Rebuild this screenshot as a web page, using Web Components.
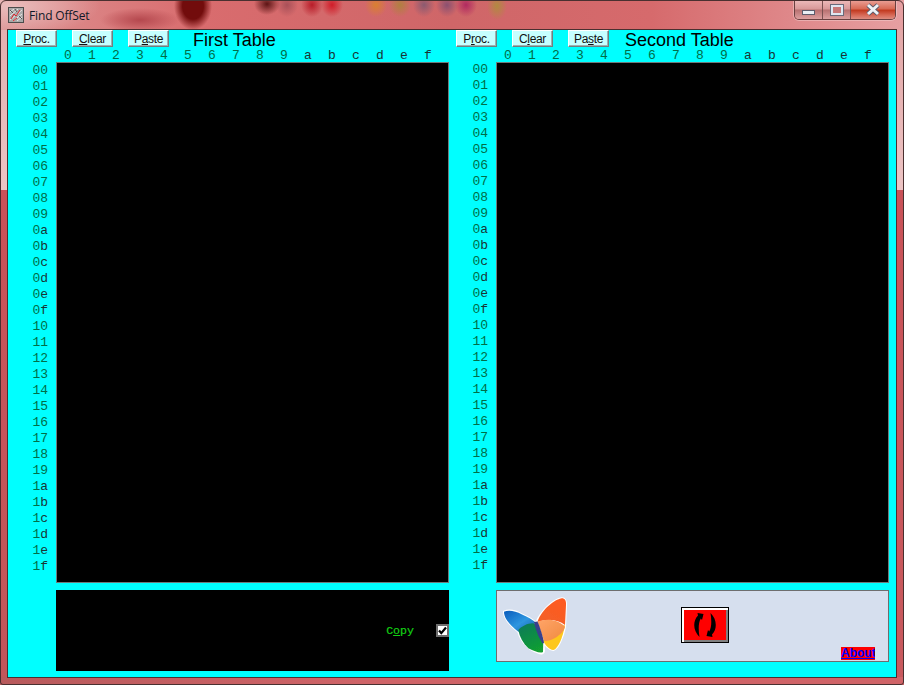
<!DOCTYPE html>
<html><head><meta charset="utf-8">
<style>
html,body{margin:0;padding:0;width:904px;height:685px;overflow:hidden;background:#c85a5c}
</style></head><body>
<win-frame>
  <win-icon slot="icon"></win-icon>
  <span slot="title">Find OffSet</span>
  <caption-buttons slot="caps"></caption-buttons>
  <table-panel side="left" title-text="First Table" u1="0" u2="0" u3="1">
    <result-pane></result-pane>
  </table-panel>
  <table-panel side="right" title-text="Second Table" u1="1" u2="1" u3="2">
    <logo-pane></logo-pane>
  </table-panel>
</win-frame>
<script>
const def=(name,html,extra)=>{
  customElements.define(name,class extends HTMLElement{
    constructor(){super();this.attachShadow({mode:'open'}).innerHTML=html;}
    connectedCallback(){extra&&extra.call(this,this.shadowRoot);}
  });
};
def('win-frame',`<style>
:host{display:flex;flex-direction:column;position:relative;width:904px;height:685px;box-sizing:border-box;overflow:hidden;
 font-family:"Liberation Sans",sans-serif;
 background:
  radial-gradient(ellipse 19px 24px at 193px 6px,#720c0c 0 55%,#72101000 100%),
  radial-gradient(ellipse 40px 12px at 140px 20px,#b5484e 0,#b5484e00 100%),
  radial-gradient(ellipse 13px 11px at 267px 4px,#5c1414 0,#5c141400 100%),
  radial-gradient(ellipse 11px 12px at 287px 5px,#a85058 0,#a8505800 100%),
  radial-gradient(ellipse 11px 12px at 312px 5px,#b81c28 0,#b81c2800 100%),
  radial-gradient(ellipse 11px 12px at 332px 5px,#d01c28 0,#d01c2800 100%),
  radial-gradient(ellipse 11px 12px at 376px 5px,#d98030 0,#d9803000 100%),
  radial-gradient(ellipse 11px 12px at 400px 5px,#b08040 0,#b0804000 100%),
  radial-gradient(ellipse 11px 12px at 424px 5px,#8a5a70 0,#8a5a7000 100%),
  radial-gradient(ellipse 11px 12px at 447px 5px,#8a5070 0,#8a507000 100%),
  radial-gradient(ellipse 11px 12px at 466px 5px,#b02a60 0,#b02a6000 100%),
  radial-gradient(ellipse 10px 14px at 497px 6px,#b08a40 0,#b08a4000 100%),
  radial-gradient(ellipse 90px 30px at 10px 6px,#eabcbc 0,#eabcbc00 100%),
  linear-gradient(90deg,#dc9494 0,#d96c6e 22%,#cf6668 50%,#d66a6c 72%,#e6a0a2 100%);
}
.edge{position:absolute;inset:0;border:1px solid #4a3030;border-radius:6px 6px 3px 3px;pointer-events:none;z-index:2}
.sideL,.sideR{position:absolute;top:30px;bottom:0;width:8px}
.sideL{left:0;background:linear-gradient(#e3b0b0 0,#ecc4c4 160px,#ecc4c4 160px,#c95258 160px,#c2565a 100%)}
.sideR{right:0;width:8px;background:linear-gradient(#e3a8a8 0,#ecc4c4 160px,#c95258 160px,#c85a5e 100%)}
.base{position:absolute;left:0;right:0;bottom:0;height:8px;background:linear-gradient(90deg,#b85a5c,#cf6468 40%,#d06468)}
.bar{position:relative;z-index:1;display:flex;align-items:flex-start;height:30px;flex:none;padding-left:8px}
.titletext{font:12px "Open Sans","Noto Sans",sans-serif;color:#101828;margin:8px 0 0 5px;line-height:16px;flex:1;letter-spacing:-.15px}
.client{position:relative;z-index:1;flex:none;display:grid;grid-template-columns:448px 440px;width:888px;height:647px;margin-left:8px;background:#0ff;outline:1px solid #4a3030}
</style>
<div class="sideL"></div><div class="sideR"></div><div class="base"></div>
<div class="bar"><slot name="icon"></slot><div class="titletext"><slot name="title"></slot></div><slot name="caps"></slot></div>
<div class="client"><slot></slot></div>
<div class="edge"></div>`);
def('win-icon',`<style>:host{display:block;width:16px;height:16px;margin-top:7px}svg{display:block}</style>
<svg width="16" height="16" viewBox="0 0 16 16"><rect x=".5" y=".5" width="15" height="15" fill="#a9a9a9" stroke="#4c4c4c"/>
<path d="M2 5l4-3M2 9l8-7M2 13L14 3M5 14l9-7M9 14l5-4" stroke="#e8e8e8" stroke-width="1"/>
<path d="M3 12l3-5 2 2 4-6M5 14l4-3" stroke="#d8222a" stroke-width="1" fill="none"/>
<path d="M2 3l3 3M7 2l2 3M11 9l3 3" stroke="#555" fill="none"/></svg>`);
def('caption-buttons',`<style>
:host{display:flex;width:102px;height:20px;margin-right:8px;border:1px solid #6a4040;border-top:0;border-radius:0 0 5px 5px;overflow:hidden;box-sizing:border-box;box-shadow:0 0 0 1px #f4d0d080}
b{display:grid;place-items:center;height:100%;box-sizing:border-box;background:linear-gradient(#eebcbc 0,#d89898 48%,#b87070 52%,#dca0a0 100%);border-right:1px solid #7a5050}
b:nth-of-type(1),b:nth-of-type(2){width:28px}
b:nth-of-type(3){flex:1;border:0;background:linear-gradient(#eba39a 0,#d86a55 46%,#c23a20 54%,#d86a58 80%,#dd8c80 100%)}
.min{width:13px;height:5px;background:#e8eef4;border:1px solid #5c5c6c;box-sizing:border-box;margin-top:6px}
.max{width:12px;height:10px;border:2px solid #dfe6f0;outline:1px solid #6a6a7a;outline-offset:0;box-sizing:border-box;background:#c87878}
</style>
<b><i class="min"></i></b><b><i class="max"></i></b>
<b><svg width="18" height="13" viewBox="0 0 18 13"><path d="M4 2l10 9M14 2L4 11" stroke="#5c5c6c" stroke-width="4.800"/><path d="M4 2l10 9M14 2L4 11" stroke="#eef2f6" stroke-width="3"/></svg></b>`);
def('tool-button',`<style>
:host{display:block;width:41px;height:17px;box-sizing:border-box;background:#c6ffff;border:1px solid;border-color:#fff #6f7f7f #6f7f7f #fff;
 box-shadow:inset -1px -1px 0 #9fb0b0;font:12px/16px "Liberation Sans",sans-serif;letter-spacing:-.35px;color:#111;text-align:center}
</style><slot></slot>`);
def('table-panel',`<style>
:host{display:block;position:relative;--pad:8px;--lab:48px;--roff:0px;--tm:9px}
:host([side=right]){--pad:0px;--lab:40px;--roff:-1px;--tm:1px}
.top{display:flex;height:19px;padding-left:var(--pad);gap:15px}
.tt{font:18px/18px "Liberation Sans",sans-serif;color:#000;margin-left:var(--tm);padding-top:1px;white-space:nowrap}
.cols{display:grid;grid-template-columns:repeat(16,24px);margin-left:var(--lab);height:13px;font:13px/13px "Liberation Mono",monospace;white-space:pre}
.cols span{padding-left:8px}
.main{display:grid;grid-template-columns:var(--lab) 393px}
.rows{display:flex;flex-direction:column;align-items:flex-end;padding:calc(1px + var(--roff)) 8px 0 0;font:13px/16px "Liberation Mono",monospace}
.black{height:521px;box-sizing:border-box;background:#000;border:1px solid #6e7a7a}
.bot{margin:7px 0 0 var(--lab);width:393px}
.d{color:#006e48}.l{color:#1a3434}
</style>
<div class="top"><tool-button class="b1"></tool-button><tool-button class="b2"></tool-button><tool-button class="b3"></tool-button><div class="tt"></div></div>
<div class="cols"></div>
<div class="main"><div class="rows"></div><div class="black"></div></div>
<div class="bot"><slot></slot></div>`,function(s){
  const u=(w,i)=>w.slice(0,i)+'<u>'+w[i]+'</u>'+w.slice(+i+1);
  const col=t=>[...t].map(c=>`<span class="${/\d/.test(c)?'d':'l'}" style="padding:0">${c}</span>`).join('');
  s.querySelector('.b1').innerHTML=u('Proc.',+this.getAttribute('u1'));
  s.querySelector('.b2').innerHTML=u('Clear',+this.getAttribute('u2'));
  s.querySelector('.b3').innerHTML=u('Paste',+this.getAttribute('u3'));
  s.querySelector('.tt').textContent=this.getAttribute('title-text');
  s.querySelector('.cols').innerHTML=[...'0123456789abcdef'].map(c=>`<span class="${/\d/.test(c)?'d':'l'}">${c}</span>`).join('');
  s.querySelector('.rows').innerHTML=Array.from({length:32},(_,i)=>`<div>${col(i.toString(16).padStart(2,'0'))}</div>`).join('');
});
def('result-pane',`<style>
:host{display:flex;align-items:center;justify-content:flex-end;height:81px;background:#000;box-sizing:border-box}
.c{font:11.6px/14px "Liberation Mono",monospace;color:#14d014;margin-right:22px;-webkit-text-stroke:.2px #14d014}
.k{width:13px;height:13px;box-sizing:border-box;background:#fff;border:2px solid #6e6e6e;display:grid;place-items:center}
</style><span class="c">C<u>o</u>py</span><span class="k"><svg width="9" height="9" viewBox="0 0 9 9"><path d="M1 4.500l2.300 2.600L8 1.500" fill="none" stroke="#000" stroke-width="2.200"/></svg></span>`);
def('logo-pane',`<style>
:host{display:grid;grid-template-columns:184px 48px 1fr;height:72px;box-sizing:border-box;background:#d6dfee;border:1px solid #6e6e6e}
svg.logo{display:block;margin:6px 0 0 5px}
.red{align-self:start;margin-top:16px;width:48px;height:36px;box-sizing:border-box;background:#f00;border:1px solid #000;box-shadow:inset 2px 2px 0 #fff,inset -2px -2px 0 #808080;display:grid;place-items:center}
.about{justify-self:end;align-self:end;margin:0 13px 1px 0;width:34px;overflow:hidden;background:#f00;color:#00f;font:bold 12px/13px "Liberation Sans",sans-serif;text-decoration:underline;height:13px;white-space:nowrap}
</style>
<svg class="logo" width="66" height="60" viewBox="0 0 66 60">
<defs>
<linearGradient id="gb" x1="0" y1="0" x2="1" y2="1"><stop offset="0" stop-color="#0a5cbc"/><stop offset=".55" stop-color="#2e96e0"/><stop offset="1" stop-color="#1c5eaa"/></linearGradient>
<linearGradient id="go" x1=".8" y1="0" x2=".2" y2="1"><stop offset="0" stop-color="#ff5a20"/><stop offset="1" stop-color="#f26028"/></linearGradient>
<linearGradient id="gl" x1="0" y1="0" x2="1" y2="1"><stop offset="0" stop-color="#ffa468"/><stop offset="1" stop-color="#f08a40"/></linearGradient>
<linearGradient id="gg" x1=".3" y1="0" x2=".7" y2="1"><stop offset="0" stop-color="#0c7c58"/><stop offset="1" stop-color="#12a030"/></linearGradient>
<filter id="s" x="-5%" y="-5%" width="110%" height="110%"><feGaussianBlur stdDeviation=".45"/></filter>
</defs>
<path d="M59.700 1.300C63 1.300 64.300 4 64 8L63 30C61 40 56 52 51.300 53C47 52.500 43 48 41.300 44.700L34.700 24.700C38 16 50 3 59.700 1.300ZM2 14.700C6 13 13 13.500 20 17.500C26 20 31 23 34.700 26L41.300 43L42 54C41.800 57 39 57 36 55.500C31 54 27 52 24 48C20 44 17.500 39 16.300 34.700C9 29 2 22 2 14.700Z" fill="#fff" stroke="#fff" stroke-width="2" stroke-linejoin="round"/>
<g filter="url(#s)">
<path d="M63 28C61 40 56 52 51.300 53C47 52.500 43 48 41.300 44L45 36Z" fill="#fdc71c"/>
<path d="M2 14.700C6 13 13 13.500 20 17.500C26 20 31 23 34 25.700L22 33L16.300 34.700C9 29 2 22 2 14.700Z" fill="url(#gb)"/>
<path d="M16.300 33C20 29 26 26 31.300 26.300C35 27 39 36 41.300 43L41 55C38 56.500 33 54.500 26.300 51.300C21 46 17.500 40 16.300 33Z" fill="url(#gg)"/>
<path d="M59.700 1.300C63 1.300 64.300 4 64 8L63 28C56 22 44 22 35.500 25C38 16 50 3 59.700 1.300Z" fill="url(#go)"/>
<path d="M35.500 25C44 21 56 22 63 29.700C62 34 58 38 53 41C49 43.500 45 44 42 44Z" fill="url(#gl)"/>
<path d="M32 25L35.500 24.500C38 30 41 40 42 46L40.500 46.500C37 41 33.500 33 32 25Z" fill="#37408c"/>
</g>
</svg>
<div class="red"><svg width="24" height="28" viewBox="0 0 24 28"><path d="M6.500 26C0 20 -.5 10 5 4.500L4.500 2L10.500 3L9 9L7.800 7.500C5 12 5.500 20 6.500 26Z" fill="#000"/><path transform="rotate(180 12 14)" d="M6.500 26C0 20 -.5 10 5 4.500L4.500 2L10.500 3L9 9L7.800 7.500C5 12 5.500 20 6.500 26Z" fill="#000"/></svg></div>
<div class="about">About</div>`);
</script>
</body></html>
